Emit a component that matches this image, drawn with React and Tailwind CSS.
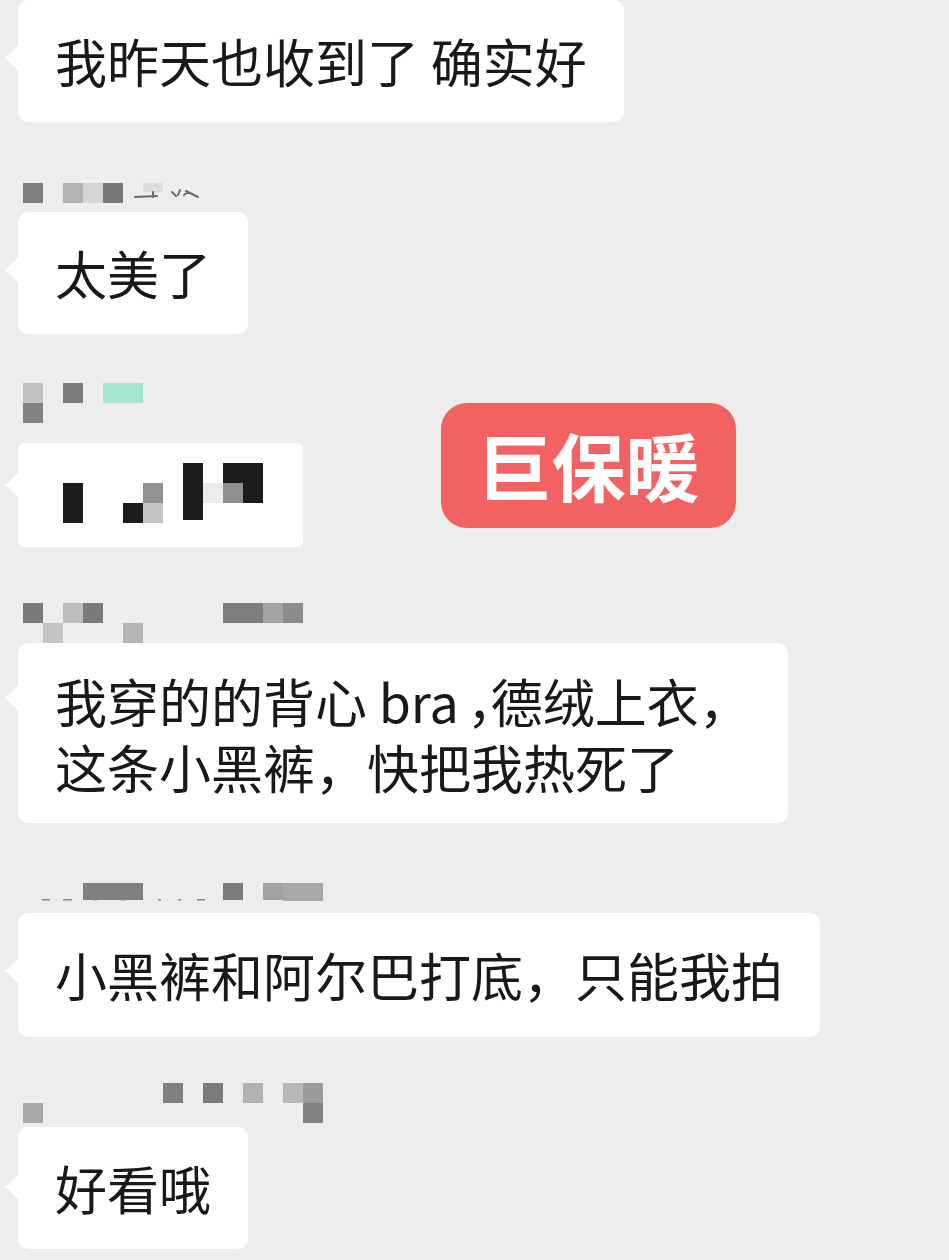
import React from "react";

const FONT = "font-['Noto_Sans_CJK_SC','Noto_Sans',sans-serif]";

function Tail({ top }) {
  return (
    <svg
      className="absolute left-[-15px]"
      style={{ top }}
      width="16"
      height="26"
      viewBox="0 0 16 26"
    >
      <polygon points="16,0 2,13 16,26" fill="#ffffff" />
    </svg>
  );
}

function Bubble({ children, className = "", tailTop = 45 }) {
  return (
    <div
      className={`relative ml-[18px] w-fit rounded-[10px] bg-white px-[37px] text-[52px] leading-[66px] text-[#191919] whitespace-nowrap ${FONT} ${className}`}
    >
      <Tail top={tailTop} />
      {children}
    </div>
  );
}

function Mosaic({ height, rects, children }) {
  return (
    <svg width="340" height={height} viewBox={`0 0 340 ${height}`} className="block shrink-0">
      {rects.map(([x, y, w, h, c], i) => (
        <rect key={i} x={x} y={y} width={w} height={h} fill={c} />
      ))}
      {children}
    </svg>
  );
}

export default function App() {
  return (
    <div className="relative flex h-[1260px] w-[949px] flex-col overflow-hidden bg-[#ededed]">
      {/* message 1 */}
      <Bubble className="py-[28px]">我昨天也收到了 确实好</Bubble>

      {/* name 1 */}
      <div className="mt-[61px]">
        <Mosaic
          height={20}
          rects={[
            [23, 0, 20, 20, "#7f7f7f"],
            [63, 0, 20, 20, "#b3b3b3"],
            [83, 0, 20, 20, "#d6d6d6"],
            [103, 0, 20, 20, "#787878"],
            [143, 0, 20, 9, "#dddddd"],
          ]}
        >
          <g stroke="#6a6a6a" strokeWidth="2" fill="none" strokeLinecap="round">
            <path d="M135 14 L157 13" />
            <path d="M153 9 L153 14" />
            <path d="M172 9 L176 13 M180 7 L178 12 M186 8 L198 14 M184 12 L188 9" />
          </g>
        </Mosaic>
      </div>

      {/* message 2 */}
      <Bubble className="mt-[9px] py-[28px]">太美了</Bubble>

      {/* name 2 */}
      <div className="mt-[49px]">
        <Mosaic
          height={40}
          rects={[
            [23, 0, 20, 20, "#c2c2c2"],
            [23, 20, 20, 20, "#828282"],
            [63, 0, 20, 20, "#7c7c7c"],
            [103, 0, 40, 20, "#a6e6d0"],
          ]}
        />
      </div>

      {/* message 3 (mosaic content) */}
      <div className="relative ml-[18px] mt-[20px] h-[104px] w-[285px] rounded-[6px] bg-white">
        <Tail top={29} />
        <svg width="285" height="104" viewBox="0 0 285 104" className="block">
          <rect x="45" y="40" width="20" height="40" fill="#1c1c1c" />
          <rect x="105" y="60" width="20" height="20" fill="#1c1c1c" />
          <rect x="125" y="40" width="20" height="20" fill="#929292" />
          <rect x="125" y="60" width="20" height="20" fill="#c4c4c4" />
          <rect x="165" y="20" width="20" height="57" fill="#1c1c1c" />
          <rect x="185" y="40" width="20" height="20" fill="#ececec" />
          <rect x="205" y="20" width="40" height="20" fill="#1c1c1c" />
          <rect x="205" y="40" width="20" height="20" fill="#8f8f8f" />
          <rect x="225" y="40" width="20" height="20" fill="#1c1c1c" />
        </svg>
      </div>

      {/* name 3 */}
      <div className="mt-[56px]">
        <Mosaic
          height={40}
          rects={[
            [23, 0, 20, 20, "#7a7a7a"],
            [43, 20, 20, 20, "#c4c4c4"],
            [63, 0, 20, 20, "#bdbdbd"],
            [83, 0, 20, 20, "#7a7a7a"],
            [123, 20, 20, 20, "#b5b5b5"],
            [223, 0, 40, 20, "#7e7e7e"],
            [263, 0, 20, 20, "#a3a3a3"],
            [283, 0, 20, 20, "#8c8c8c"],
          ]}
        />
      </div>

      {/* message 4 */}
      <Bubble className="pt-[25px] pb-[23px]" tailTop={42}>
        我穿的的背心 bra<span className="ml-[8px] inline-block w-[24px]">，</span>德绒上衣，
        <br />
        这条小黑裤，快把我热死了
      </Bubble>

      {/* name 4 */}
      <div className="mt-[60px]">
        <Mosaic
          height={20}
          rects={[
            [83, 0, 60, 17, "#808080"],
            [223, 0, 20, 17, "#7b7b7b"],
            [263, 0, 20, 17, "#a2a2a2"],
            [283, 0, 40, 18, "#a9a9a9"],
            [42, 16, 8, 1.5, "#8a8a8a"],
            [63, 16, 9, 1.5, "#8a8a8a"],
            [93, 16, 4, 1.5, "#8a8a8a"],
            [121, 16, 4, 1.5, "#8a8a8a"],
            [158, 16, 3, 1.5, "#8a8a8a"],
            [178, 16, 3, 1.5, "#8a8a8a"],
            [197, 16, 8, 1.5, "#8a8a8a"],
          ]}
        />
      </div>

      {/* message 5 */}
      <Bubble className="mt-[10px] py-[29px]">小黑裤和阿尔巴打底，只能我拍</Bubble>

      {/* name 5 */}
      <div className="mt-[46px]">
        <Mosaic
          height={40}
          rects={[
            [23, 20, 20, 20, "#a9a9a9"],
            [163, 0, 20, 20, "#818181"],
            [203, 0, 20, 20, "#7b7b7b"],
            [243, 0, 20, 20, "#b2b2b2"],
            [283, 0, 20, 20, "#b8b8b8"],
            [303, 0, 20, 20, "#9c9c9c"],
            [303, 20, 20, 20, "#828282"],
          ]}
        />
      </div>

      {/* message 6 */}
      <Bubble className="mt-[4px] py-[28px]" tailTop={47}>好看哦</Bubble>

      {/* red badge overlay */}
      <div
        className={`absolute left-[441px] top-[403px] flex h-[125px] w-[295px] items-center justify-center rounded-[26px] bg-[#f36262] pb-[4px] text-[74px] font-semibold leading-none text-[#fdfdfd] ${FONT}`}
      >
        巨保暖
      </div>
    </div>
  );
}
